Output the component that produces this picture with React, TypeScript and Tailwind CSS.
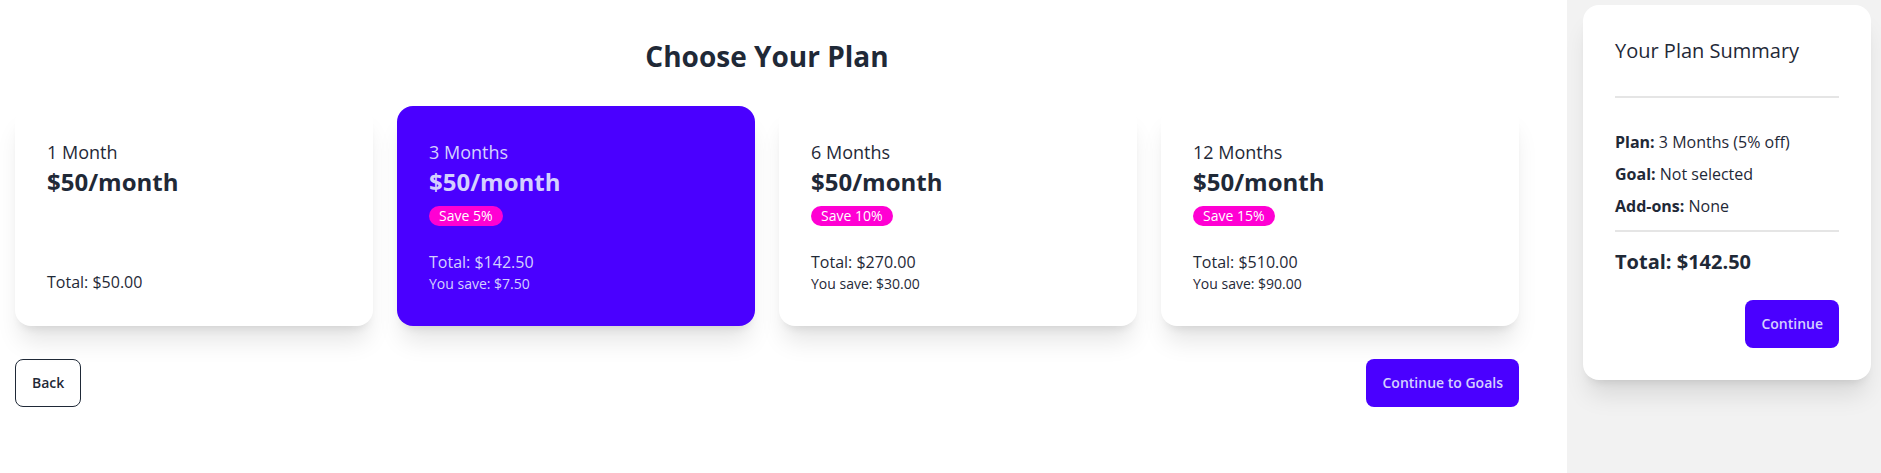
import React from "react";

type Plan = {
  label: string;
  price: string;
  save?: string;
  total: string;
  youSave?: string;
};

const plans: Plan[] = [
  { label: "1 Month", price: "$50/month", total: "$50.00" },
  { label: "3 Months", price: "$50/month", save: "Save 5%", total: "$142.50", youSave: "$7.50" },
  { label: "6 Months", price: "$50/month", save: "Save 10%", total: "$270.00", youSave: "$30.00" },
  { label: "12 Months", price: "$50/month", save: "Save 15%", total: "$510.00", youSave: "$90.00" },
];

function PlanCard({ plan, selected }: { plan: Plan; selected: boolean }) {
  return (
    <div
      className={
        selected
          ? "flex h-[220px] w-[358px] flex-col justify-between rounded-2xl bg-[#4a00ff] p-8 text-[#d4d0ff] shadow-xl"
          : "flex h-[220px] w-[358px] flex-col justify-between rounded-2xl bg-white p-8 text-[#1f2937] shadow-xl"
      }
    >
      <div className="flex flex-col items-start">
        <div className="text-lg leading-7">{plan.label}</div>
        <div className="text-2xl font-bold leading-8">{plan.price}</div>
        {plan.save && (
          <span className="mt-2 inline-flex h-5 items-center rounded-full bg-[#ff00d3] px-2.5 text-sm leading-5 text-white">
            {plan.save}
          </span>
        )}
      </div>
      <div>
        <div className="text-base leading-6">Total: {plan.total}</div>
        {plan.youSave && <div className="text-sm leading-5">You save: {plan.youSave}</div>}
      </div>
    </div>
  );
}

export default function App() {
  return (
    <div
      className="flex min-h-screen bg-white text-[#1f2937]"
      style={{ fontFamily: '"Open Sans", "Noto Sans", sans-serif' }}
    >
      {/* Main column */}
      <div className="w-[1567px] pl-[15px] pt-[38px]">
        <div className="w-[1504px]">
          <h1 className="mb-8 text-center text-[28px] font-bold leading-9">Choose Your Plan</h1>

          <div className="flex gap-6">
            {plans.map((p, i) => (
              <PlanCard key={p.label} plan={p} selected={i === 1} />
            ))}
          </div>

          <div className="mt-[33px] flex items-center justify-between">
            <button className="h-12 rounded-lg border border-[#1f2937] px-4 text-sm font-semibold text-[#1f2937]">
              Back
            </button>
            <button className="h-12 rounded-lg bg-[#4a00ff] px-4 text-sm font-semibold text-[#d4d0ff]">
              Continue to Goals
            </button>
          </div>
        </div>
      </div>

      {/* Sidebar */}
      <div className="flex-1 bg-[#f2f2f2] pl-4 pr-[10px] pt-[5px]">
        <div className="rounded-2xl bg-white p-8 shadow-xl">
          <h2 className="text-xl font-medium leading-7">Your Plan Summary</h2>
          <div className="mb-8 mt-[31px] h-[2px] bg-[#e5e5e5]" />
          <div className="space-y-2 text-base leading-6">
            <div>
              <span className="font-bold">Plan:</span> 3 Months (5% off)
            </div>
            <div>
              <span className="font-bold">Goal:</span> Not selected
            </div>
            <div>
              <span className="font-bold">Add-ons:</span> None
            </div>
          </div>
          <div className="mb-4 mt-3 h-[2px] bg-[#e5e5e5]" />
          <div className="text-xl font-bold leading-7">Total: $142.50</div>
          <div className="mt-6 flex justify-end">
            <button className="h-12 rounded-lg bg-[#4a00ff] px-4 text-sm font-semibold text-[#d4d0ff]">
              Continue
            </button>
          </div>
        </div>
      </div>
    </div>
  );
}
